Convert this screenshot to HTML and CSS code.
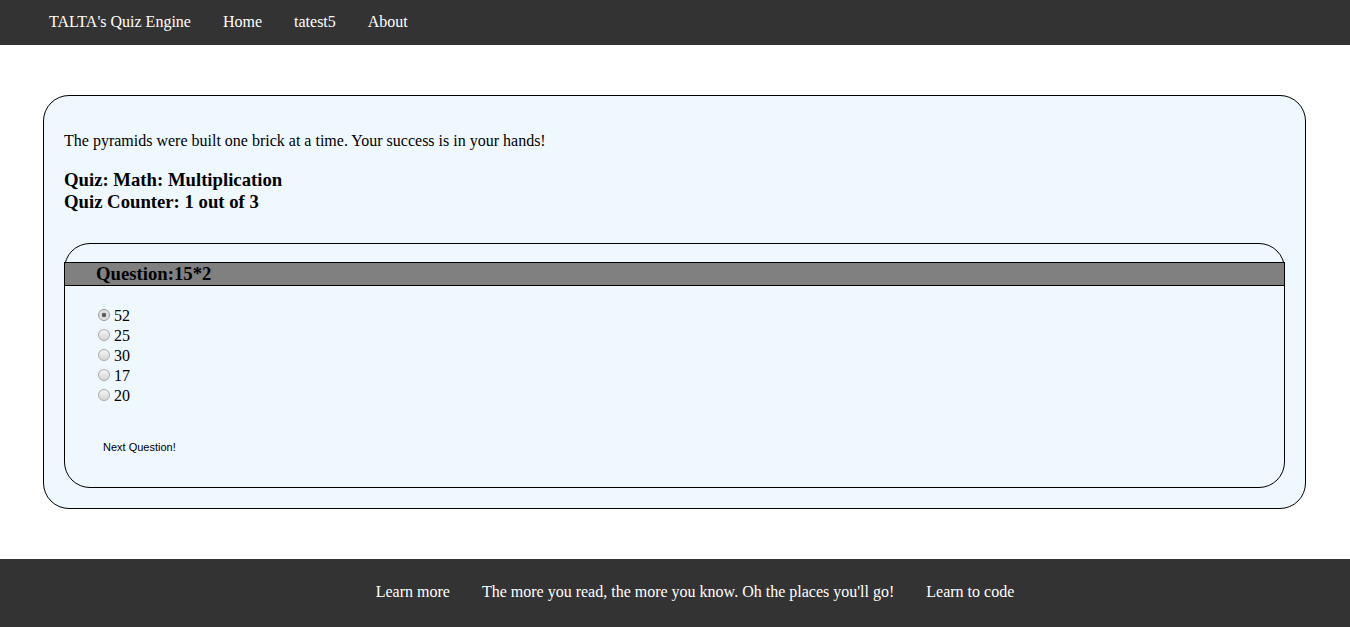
FILE: index.html
```html
<!DOCTYPE html>
<html>
<head>
<meta charset="utf-8">
<title>TALTA's Quiz Engine</title>
<link rel="stylesheet" href="styles.css">
</head>
<body>
<nav class="topnav">
  <a class="nav-link" href="#">TALTA's Quiz Engine</a>
  <a class="nav-link" href="#">Home</a>
  <a class="nav-link" href="#">tatest5</a>
  <a class="nav-link" href="#">About</a>
</nav>
<main class="quiz-card">
  <p class="motto">The pyramids were built one brick at a time. Your success is in your hands!</p>
  <h3 class="quiz-info">Quiz: Math: Multiplication<br>Quiz Counter: 1 out of 3</h3>
  <form class="question-card">
    <h3 class="question-title">Question:15*2</h3>
    <div class="answers">
      <label class="answer"><input type="radio" name="a" checked><span>52</span></label>
      <label class="answer"><input type="radio" name="a"><span>25</span></label>
      <label class="answer"><input type="radio" name="a"><span>30</span></label>
      <label class="answer"><input type="radio" name="a"><span>17</span></label>
      <label class="answer"><input type="radio" name="a"><span>20</span></label>
    </div>
    <button type="button" class="next-btn">Next Question!</button>
  </form>
</main>
<footer class="footer">
  <a class="foot-link" href="#">Learn more</a>
  <span class="foot-link">The more you read, the more you know. Oh the places you'll go!</span>
  <a class="foot-link" href="#">Learn to code</a>
</footer>
</body>
</html>
```
FILE: styles.css
```css
html, body {
  margin: 0;
  padding: 0;
  background: #fff;
  font-family: "Liberation Serif", "Times New Roman", serif;
  font-size: 16px;
  color: #000;
}

.topnav {
  background: #333;
  height: 45px;
  display: flex;
  align-items: center;
  padding-left: 33px;
  box-sizing: border-box;
}

.nav-link {
  color: #fff;
  text-decoration: none;
  padding: 0 16px;
  line-height: 20px;
  font-size: 16px;
  margin-top: -2px;
}

.quiz-card {
  margin: 50px 44px 50px 43px;
  background: #f0f8ff;
  border: 1px solid #000;
  border-radius: 26px;
  padding: 20px 20px 20px 20px;
}

.motto {
  margin: 16px 0 0 0;
  line-height: 18px;
}

.quiz-info {
  font-size: 18.72px;
  line-height: 22px;
  margin: 19px 0 30px 0;
}

.question-card {
  border: 1px solid #000;
  border-radius: 26px;
  padding: 18px 0 33px 0;
  margin: 0;
}

.question-title {
  margin: 0 -1px;
  background: #808080;
  border: 1px solid #000;
  font-size: 18.72px;
  line-height: 22px;
  padding-left: 31px;
}

.answers {
  display: flex;
  flex-direction: column;
  padding: 20px 0 0 33px;
}

.answer {
  display: flex;
  align-items: center;
  height: 20px;
  line-height: 20px;
}

.answer input {
  appearance: none;
  -webkit-appearance: none;
  width: 12px;
  height: 12px;
  margin: 0 4px 2px 0;
  border: 1px solid #aaa;
  border-radius: 50%;
  background: linear-gradient(#f4f4f4, #d6d6d6);
  box-sizing: border-box;
}

.answer input:checked {
  background: radial-gradient(circle, #555 0, #666 2px, #ddd 2.6px, #eee 6px);
  border-color: #999;
}

.next-btn {
  display: block;
  margin: 34px 0 0 38px;
  padding: 0;
  border: none;
  background: transparent;
  font-family: "Liberation Sans", Arial, sans-serif;
  font-size: 11px;
  line-height: 14px;
  color: #000;
}

.footer {
  background: #333;
  display: flex;
  justify-content: center;
  padding: 23px 0 25px 40px;
}

.foot-link {
  color: #fff;
  text-decoration: none;
  padding: 0 16px;
  line-height: 20px;
}
```
